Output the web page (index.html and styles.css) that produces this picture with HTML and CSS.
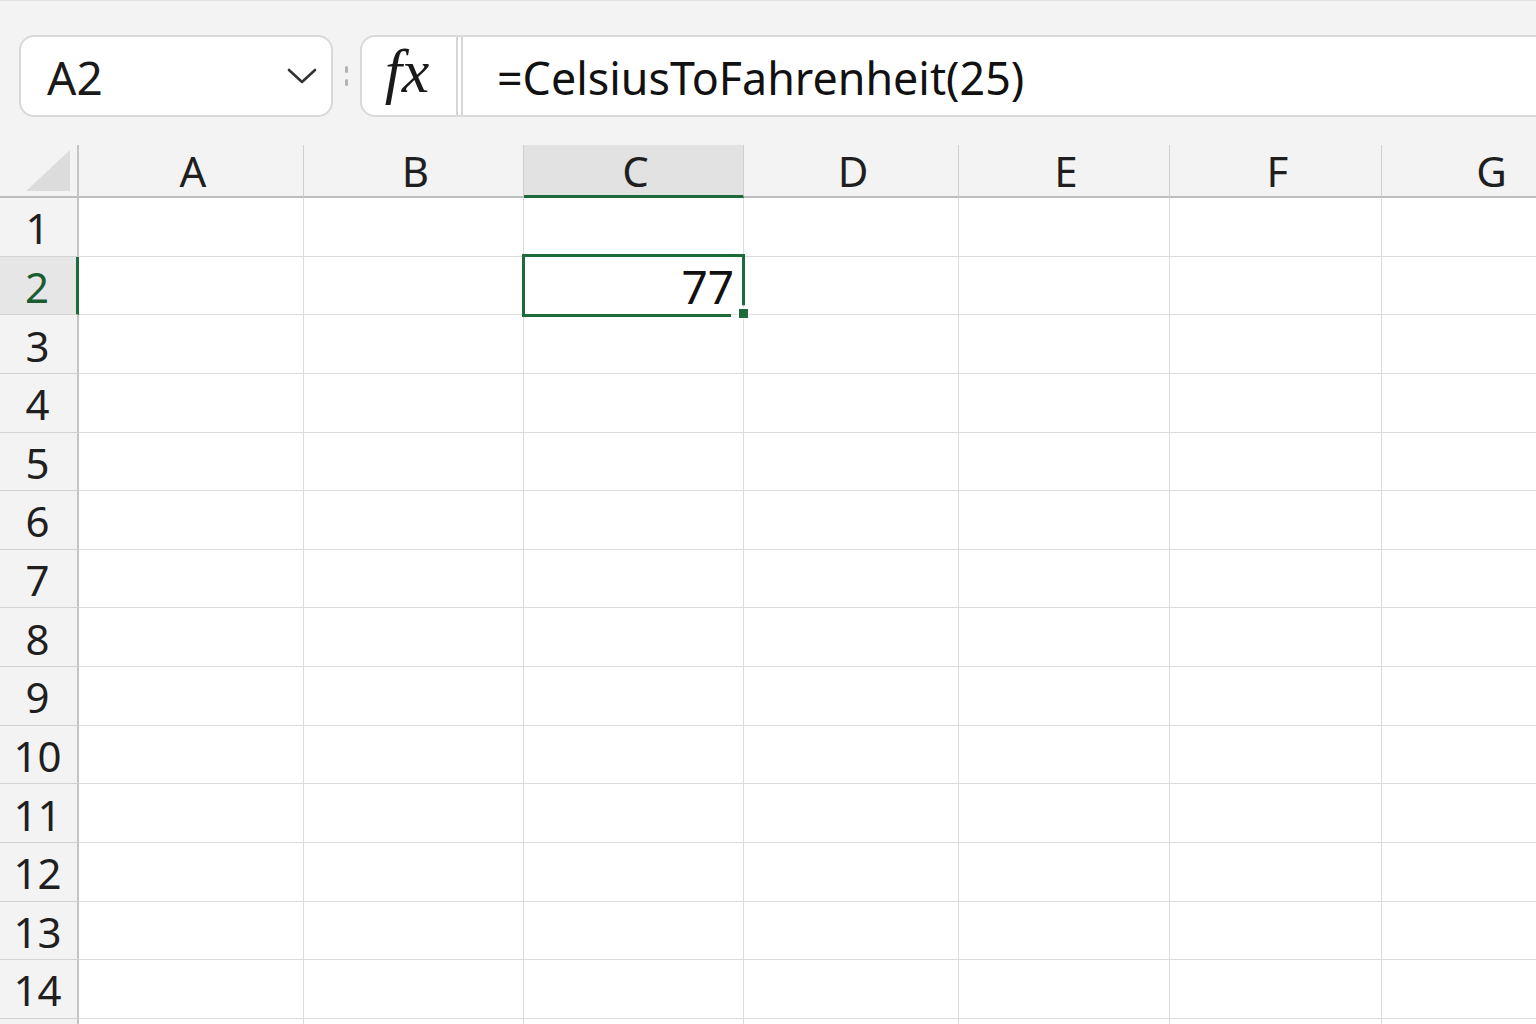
FILE: index.html
```html
<!DOCTYPE html>
<html>

<head>
  <title>Book1 - Excel</title>
  <link rel="stylesheet" href="styles.css">
</head>

<body>
  <div class="toolbar">
    <div class="namebox">
      <span class="name">A2</span>
      <svg class="chevron" width="30" height="16" viewBox="0 0 30 16">
        <path d="M2 2 L15 14 L28 2" fill="none" stroke="#333" stroke-width="2.6" stroke-linecap="round" stroke-linejoin="round"/>
      </svg>
    </div>
    <div class="grip"><span></span><span></span></div>
    <div class="formulabar">
      <div class="fx">fx</div>
      <div class="divider"></div>
      <div class="formula">=CelsiusToFahrenheit(25)</div>
    </div>
  </div>

  <div class="sheet">
    <div class="corner"><div class="triangle"></div></div>
    <div class="colhead">A</div>
    <div class="colhead">B</div>
    <div class="colhead selected">C</div>
    <div class="colhead">D</div>
    <div class="colhead">E</div>
    <div class="colhead">F</div>
    <div class="colhead">G</div>

    <div class="rowhead">1</div>
    <div class="cell"></div><div class="cell"></div><div class="cell"></div><div class="cell"></div><div class="cell"></div><div class="cell"></div><div class="cell"></div>

    <div class="rowhead selected">2</div>
    <div class="cell"></div><div class="cell"></div><div class="cell active">77</div><div class="cell"></div><div class="cell"></div><div class="cell"></div><div class="cell"></div>

    <div class="rowhead">3</div>
    <div class="cell"></div><div class="cell"></div><div class="cell"></div><div class="cell"></div><div class="cell"></div><div class="cell"></div><div class="cell"></div>

    <div class="rowhead">4</div>
    <div class="cell"></div><div class="cell"></div><div class="cell"></div><div class="cell"></div><div class="cell"></div><div class="cell"></div><div class="cell"></div>

    <div class="rowhead">5</div>
    <div class="cell"></div><div class="cell"></div><div class="cell"></div><div class="cell"></div><div class="cell"></div><div class="cell"></div><div class="cell"></div>

    <div class="rowhead">6</div>
    <div class="cell"></div><div class="cell"></div><div class="cell"></div><div class="cell"></div><div class="cell"></div><div class="cell"></div><div class="cell"></div>

    <div class="rowhead">7</div>
    <div class="cell"></div><div class="cell"></div><div class="cell"></div><div class="cell"></div><div class="cell"></div><div class="cell"></div><div class="cell"></div>

    <div class="rowhead">8</div>
    <div class="cell"></div><div class="cell"></div><div class="cell"></div><div class="cell"></div><div class="cell"></div><div class="cell"></div><div class="cell"></div>

    <div class="rowhead">9</div>
    <div class="cell"></div><div class="cell"></div><div class="cell"></div><div class="cell"></div><div class="cell"></div><div class="cell"></div><div class="cell"></div>

    <div class="rowhead">10</div>
    <div class="cell"></div><div class="cell"></div><div class="cell"></div><div class="cell"></div><div class="cell"></div><div class="cell"></div><div class="cell"></div>

    <div class="rowhead">11</div>
    <div class="cell"></div><div class="cell"></div><div class="cell"></div><div class="cell"></div><div class="cell"></div><div class="cell"></div><div class="cell"></div>

    <div class="rowhead">12</div>
    <div class="cell"></div><div class="cell"></div><div class="cell"></div><div class="cell"></div><div class="cell"></div><div class="cell"></div><div class="cell"></div>

    <div class="rowhead">13</div>
    <div class="cell"></div><div class="cell"></div><div class="cell"></div><div class="cell"></div><div class="cell"></div><div class="cell"></div><div class="cell"></div>

    <div class="rowhead">14</div>
    <div class="cell"></div><div class="cell"></div><div class="cell"></div><div class="cell"></div><div class="cell"></div><div class="cell"></div><div class="cell"></div>

    <!-- next row only peeks in at the bottom edge -->
    <div class="rowhead"></div>
    <div class="cell"></div><div class="cell"></div><div class="cell"></div><div class="cell"></div><div class="cell"></div><div class="cell"></div><div class="cell"></div>
  </div>
</body>

</html>
```

FILE: styles.css
```css
html,
body {
  margin: 0;
  height: 100%;
  overflow: hidden;
}

body {
  font-family: "Noto Sans", "Open Sans", Arial, sans-serif;
  background-color: #f3f3f3;
  color: #1a1a1a;
  border-top: 1px solid #e2e2e2;
  box-sizing: border-box;
}

/* formula bar row */
.toolbar {
  display: flex;
  align-items: flex-start;
  height: 144px;
  padding: 34px 0 0 19px;
  box-sizing: border-box;
}

.namebox {
  display: flex;
  align-items: center;
  justify-content: space-between;
  width: 314px;
  height: 82px;
  padding: 0 14px 0 26px;
  box-sizing: border-box;
  background-color: #fff;
  border: 2px solid #d9d9d9;
  border-radius: 15px;
}

.name {
  font-size: 46px;
  line-height: 1;
  padding-top: 2px;
}

.grip {
  display: flex;
  flex-direction: column;
  gap: 6px;
  width: 27px;
  height: 82px;
  justify-content: center;
  align-items: center;
}

.grip span {
  width: 3px;
  height: 7px;
  border-radius: 2px;
  background-color: #b3b3b3;
}

.formulabar {
  display: flex;
  flex: 1;
  height: 82px;
  margin-right: -30px;
  background-color: #fff;
  border: 2px solid #d9d9d9;
  border-radius: 15px 0 0 15px;
  box-sizing: border-box;
}

.fx {
  width: 94px;
  display: flex;
  align-items: center;
  justify-content: center;
  font-family: "Liberation Serif", "DejaVu Serif", serif;
  font-style: italic;
  font-size: 62px;
  padding: 0 4px 10px 0;
  box-sizing: border-box;
}

.divider {
  width: 3px;
  border-left: 2px solid #d6d6d6;
  border-right: 2px solid #d6d6d6;
}

.formula {
  display: flex;
  align-items: center;
  padding: 3px 0 0 34px;
  font-size: 44.8px;
  color: #111;
}

/* grid */
.sheet {
  display: grid;
  grid-template-columns: 79px 225px 220px 220px 215px 211px 212px 216px;
  grid-template-rows: 53px;
  grid-auto-rows: 58.64px;
  background-color: #fff;
}

.corner,
.colhead,
.rowhead {
  background-color: #f3f3f3;
  display: flex;
  align-items: center;
  justify-content: center;
  font-size: 42px;
  color: #1f1f1f;
  box-sizing: border-box;
}

.corner {
  align-items: flex-end;
  justify-content: flex-end;
  padding: 0 7px 5px 0;
  border-right: 2px solid #c4c4c4;
  border-bottom: 2px solid #bdbdbd;
}

.triangle {
  width: 44px;
  height: 41px;
  background-color: #dcdcdc;
  clip-path: polygon(100% 0, 100% 100%, 0 100%);
}

.colhead {
  border-right: 1px solid #cfcfcf;
  border-bottom: 2px solid #bdbdbd;
  padding: 0 0 0 4px;
}

.colhead.selected {
  background-color: #e2e2e2;
  border-bottom: 3px solid #1e6b3a;
}

.rowhead {
  border-right: 2px solid #c4c4c4;
  border-bottom: 1px solid #d2d2d2;
  padding: 2px 2px 0 0;
}

.rowhead.selected {
  background-color: #e6e6e6;
  border-right: 3px solid #1e6b3a;
  color: #1b5c31;
}

.cell {
  border-right: 1px solid #dcdcdc;
  border-bottom: 1px solid #dcdcdc;
  box-sizing: border-box;
}

.cell.active {
  position: relative;
  display: flex;
  align-items: center;
  justify-content: flex-end;
  padding: 2px 9px 0 0;
  font-size: 46px;
  color: #111;
}

/* selection frame and fill handle */
.cell.active::before {
  content: "";
  position: absolute;
  left: -2px;
  top: -3px;
  right: -2px;
  bottom: -3px;
  border: 3px solid #1e6b3a;
  clip-path: polygon(0 0, 100% 0, 100% calc(100% - 12px), calc(100% - 14px) calc(100% - 12px), calc(100% - 14px) 100%, 0 100%);
}

.cell.active::after {
  content: "";
  position: absolute;
  right: -6px;
  bottom: -5px;
  width: 9px;
  height: 9px;
  background-color: #1e6b3a;
  border: 1px solid #fff;
}
```
